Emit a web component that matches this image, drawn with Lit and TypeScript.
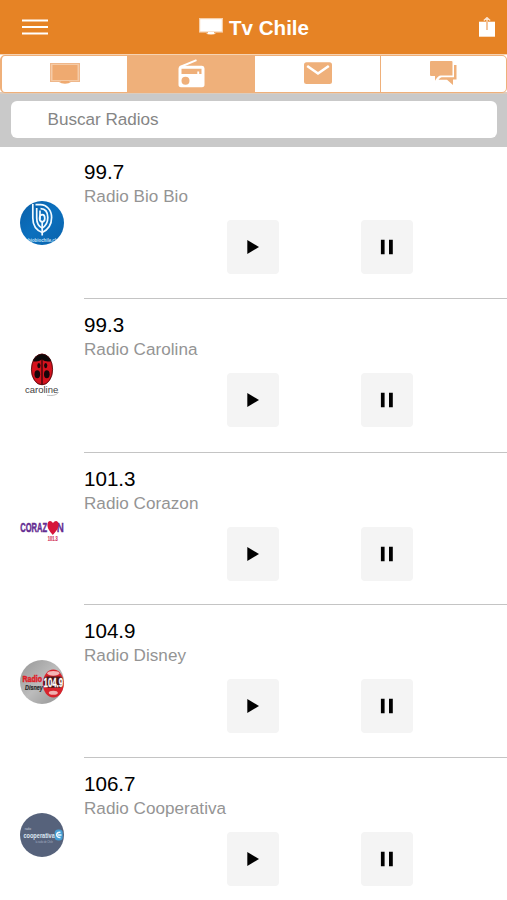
import { LitElement, html, svg, css } from "lit";
import { customElement } from "lit/decorators.js";

const logos = {
  biobio: svg`
    <defs>
      <linearGradient id="bio" x1="0" y1="0" x2="1" y2="1"><stop offset="0" stop-color="#0a5fa8"/><stop offset=".5" stop-color="#0b70be"/><stop offset="1" stop-color="#0a62ab"/></linearGradient>
      <clipPath id="bioClip"><circle cx="22" cy="22" r="22"/></clipPath>
    </defs>
    <circle cx="22" cy="22" r="22" fill="url(#bio)"/>
    <g fill="none" stroke="#f2faff" stroke-width="1.7" clip-path="url(#bioClip)">
      <path d="M12.8 3V17C12.8 25 17 29.5 22.2 31.5C27.5 29 31.6 24 31.6 16.5C31.6 9 26.5 3.6 20.5 3.6H15.5"/>
      <path d="M16.7 7V17C16.7 22.5 19 25.5 22.2 27C25.6 25 27.8 21.5 27.8 16.5C27.8 11 25 7.8 20.5 7.6"/>
      <path d="M20 9.5V18.5M22.2 21V34.5"/>
      <ellipse cx="22.2" cy="17.3" rx="2.6" ry="3.6"/>
    </g>
    <g clip-path="url(#bioClip)"><text transform="translate(8 41) scale(.88 1)" font-size="5" font-weight="700" fill="#c3e4f8">biobiochile.cl</text></g>`,
  carolina: svg`
    <ellipse cx="22" cy="15.4" rx="10.8" ry="15.6" fill="#d5121d"/>
    <path d="M12.6 7C15 2 18 0 22 0S29 2 31.4 7C28 8 24.5 7.6 22 5.6C19 7.6 16 8 12.6 7Z" fill="#0c0808"/>
    <path d="M22 5V30.5" stroke="#270508" stroke-width="1.2"/>
    <ellipse cx="18.9" cy="11.6" rx="1.6" ry="2.6" fill="#17060a"/><ellipse cx="25.7" cy="11.6" rx="1.6" ry="2.6" fill="#17060a"/>
    <ellipse cx="17.3" cy="20.3" rx="2.8" ry="4" fill="#17060a"/><ellipse cx="26.8" cy="20.3" rx="2.8" ry="4" fill="#17060a"/>
    <ellipse cx="22" cy="15.4" rx="10.6" ry="15.4" fill="none" stroke="#3c0b0d" stroke-width=".8"/>
    <text transform="translate(5 38.8) scale(1.08 1)" font-size="8.8" fill="#3e3e3e">caroline</text>
    <path d="M27 41.2C31 42 37 41.5 38.5 38" fill="none" stroke="#aaa" stroke-width=".8"/>`,
  corazon: svg`
    <text transform="translate(.2 23.6) scale(.6 1)" font-size="12.6" font-weight="700" fill="#642c91" stroke="#642c91" stroke-width=".5">CORAZ</text>
    <text transform="translate(36.8 23.6) scale(.78 1)" font-size="12.6" font-weight="700" fill="#642c91" stroke="#642c91" stroke-width=".3">N</text>
    <path d="M32.8 27C29.5 23 27 20 27.5 16C28 12.3 31 11.8 33 15C35 11.7 38.6 12.5 38.6 16.5C38.6 20.5 35.8 23.5 32.8 27Z" fill="#d6163b"/>
    <text transform="translate(27.8 33.4) scale(.63 1)" font-size="6.4" font-weight="700" fill="#d33a63" stroke="#d33a63" stroke-width=".2">101.3</text>`,
  disney: svg`
    <defs><linearGradient id="dis" x1="0" y1="0" x2="1" y2="1"><stop offset="0" stop-color="#979797"/><stop offset=".5" stop-color="#bcbcbc"/><stop offset="1" stop-color="#909090"/></linearGradient></defs>
    <circle cx="22" cy="22" r="22" fill="url(#dis)"/>
    <ellipse cx="33.3" cy="23.6" rx="10.5" ry="14" fill="#d8232c"/>
    <ellipse cx="33.3" cy="13.3" rx="6" ry="2.4" fill="#f3b4b5"/>
    <rect x="23.6" y="16.6" width="19.4" height="11.2" rx="4" fill="#4a1517"/>
    <ellipse cx="33.3" cy="32.8" rx="4.5" ry="2" fill="#efb0b0"/>
    <text transform="translate(23.6 26.6) scale(.62 1)" font-size="12.6" font-weight="700" fill="#fff" stroke="#fff" stroke-width=".3">104.9</text>
    <text transform="translate(2.4 22.4) scale(.82 1)" font-size="8.6" font-weight="700" fill="#df1e29" stroke="#df1e29" stroke-width=".5">Radio</text>
    <text transform="translate(5 30.4) scale(.7 1)" font-size="7.8" font-style="italic" font-weight="700" fill="#272727" stroke="#272727" stroke-width=".2">Disney</text>`,
  cooperativa: svg`
    <circle cx="22" cy="22" r="22" fill="#56627b"/>
    <text transform="translate(4.8 17.4) scale(.8 1)" font-size="3.6" fill="#c8d2df">radio</text>
    <text transform="translate(3.4 25) scale(.72 1)" font-size="7.8" font-weight="700" fill="#dde7f1">cooperativa</text>
    <text transform="translate(15.5 30) scale(.8 1)" font-size="3" fill="#a9b5c6">la radio de Chile</text>
    <rect x="34.7" y="16.6" width="8" height="11" rx="3.5" fill="#459fd5"/>
    <path d="M40.5 19.5C36 18 35 25 40.5 24.5M38 22H41.5" stroke="#eefaff" stroke-width="1.6" fill="none"/>`,
};

const stations = [
  { freq: "99.7", name: "Radio Bio Bio", logo: logos.biobio },
  { freq: "99.3", name: "Radio Carolina", logo: logos.carolina },
  { freq: "101.3", name: "Radio Corazon", logo: logos.corazon },
  { freq: "104.9", name: "Radio Disney", logo: logos.disney },
  { freq: "106.7", name: "Radio Cooperativa", logo: logos.cooperativa },
];

@customElement("app-root")
export class AppRoot extends LitElement {
  static styles = css`
    :host {
      display: block;
      height: 900px;
      overflow: hidden;
      background: #fff;
      font-family: "Liberation Sans", Arial, sans-serif;
    }
    * { box-sizing: border-box; }
    svg { display: block; flex: none; }
    svg text { font-family: "Liberation Sans", Arial, sans-serif; }
    .bar {
      height: 54px;
      padding: 0 12px 0 22px;
      display: grid;
      grid-template-columns: 60px 1fr 70px;
      align-items: center;
      background: #e68325;
      color: #fff;
    }
    .title {
      display: flex;
      align-items: center;
      justify-content: center;
      gap: 6px;
      padding-left: 1px;
      font-size: 20.6px;
      line-height: 24px;
      font-weight: 700;
      white-space: nowrap;
    }
    .title svg { margin-top: -3px; }
    .title span { padding-top: 2px; }
    .share { justify-self: end; }
    .tabs {
      height: 40px;
      padding: 1px 0;
      background: linear-gradient(#f6d3b3 1px, #fff 1px, #fff 38px, #dcccbd 38px);
    }
    .segments {
      height: 38px;
      display: grid;
      grid-template-columns: 125px 127px 126px 1fr;
      border: 1px solid #efb07a;
      border-left-width: 2px;
      border-radius: 5px;
      overflow: hidden;
    }
    .tab {
      display: flex;
      justify-content: center;
      padding-top: 3px;
      border-left: 1px solid #efb07a;
      color: #efb07a;
    }
    .tab:first-child { border-left: 0; }
    .tab.on { background: #efb07a; color: #fff; }
    .search { height: 53px; padding: 7px 10px 9px 11px; background: #c9c9c9; }
    .field {
      height: 37px;
      padding-left: 36.5px;
      border-radius: 6px;
      background: #fff;
      color: #858585;
      font-size: 17.1px;
      line-height: 38px;
    }
    .row {
      height: 153px;
      padding-left: 20px;
      display: grid;
      grid-template-columns: 64px 1fr;
    }
    .row:nth-child(1), .row:nth-child(3) { height: 152px; }
    .row:nth-child(2) { height: 154px; }
    .row:nth-child(n + 2) .body { padding-top: 14px; }
    .row:nth-child(n + 2) .logo { margin-top: 55px; }
    .logo { margin-top: 54px; overflow: visible; }
    .body { border-bottom: 1px solid #c4c4c4; padding-top: 13px; }
    .freq { font-size: 20.6px; line-height: 24px; color: #000; }
    .name { margin-top: 2px; font-size: 17.1px; line-height: 22px; color: #949494; letter-spacing: 0.03px; }
    .controls { display: flex; gap: 82px; padding: 12px 0 0 143px; }
    .btn {
      width: 52px;
      height: 54px;
      display: grid;
      place-items: center;
      border: 0;
      padding: 0;
      border-radius: 4px;
      background: #f4f4f4;
    }
  `;

  render() {
    return html`
      <header class="bar">
        <svg width="26" height="18" viewBox="0 0 26 18" stroke="#fff" stroke-width="2"><path d="M0 2.5H26M0 9H26M0 15.5H26"/></svg>
        <div class="title">
          <svg width="24" height="18" viewBox="0 0 24 18">
            <rect x=".6" y="1.6" width="22.8" height="13.4" fill="#fff" stroke="#f7cfaa" stroke-width="1.2"/>
            <path d="M9 15H15V16.2H17Q16 17.6 12 17.6T7 16.2H9Z" fill="#fff"/>
          </svg>
          <span>Tv Chile</span>
        </div>
        <svg class="share" width="16" height="21" viewBox="0 0 16 21">
          <rect y="4.7" width="16" height="15" fill="#fff"/>
          <path d="M8 13V4" stroke="#efa565" stroke-width="1.3"/>
          <path d="M8 4.7V.8M4.8 3.4L8 .6L11.2 3.4" fill="none" stroke="#fbe3cf" stroke-width="1.3"/>
        </svg>
      </header>
      <nav class="tabs">
        <div class="segments">
          <div class="tab">
            <svg width="30" height="28" viewBox="0 0 30 28">
              <rect x=".5" y="4.5" width="29" height="18" fill="#f5cba6" stroke="#efb78a"/>
              <rect x="2.5" y="6" width="25" height="15" fill="#efaa70"/>
              <path d="M11 22H19V23H21Q19 24.8 15 24.8T9 23H11Z" fill="#efaa70"/>
            </svg>
          </div>
          <div class="tab on">
            <svg width="27" height="30" viewBox="0 0 27 30">
              <path d="M2 8L18.5 1.2" stroke="#fff" stroke-width="1.9"/>
              <path fill="#fff" fill-rule="evenodd" d="M3 6.8H24A2.7 2.7 0 0 1 26.5 9.5V25.5A2.7 2.7 0 0 1 24 28.3H3A2.7 2.7 0 0 1 .5 25.5V9.5A2.7 2.7 0 0 1 3 6.8ZM3.5 9.8V15H19.3V12.5H21.2V15H23.5V9.8ZM7.5 17.7A4 4 0 1 0 7.5 25.7A4 4 0 1 0 7.5 17.7Z"/>
            </svg>
          </div>
          <div class="tab">
            <svg width="28" height="28" viewBox="0 0 28 28">
              <rect y="3.2" width="28" height="21.8" rx="2.5" fill="#efb07a"/>
              <path d="M3.2 7L14 14.5L24.8 7" fill="none" stroke="#fff" stroke-width="2.6"/>
            </svg>
          </div>
          <div class="tab">
            <svg width="27" height="28" viewBox="0 0 27 28" fill="#efb07a">
              <path d="M1 2H21.5A1 1 0 0 1 22.5 3V16.5H11C8.5 16.5 7.5 18 5 21.8V17H1A1 1 0 0 1 0 16V3A1 1 0 0 1 1 2Z"/>
              <path d="M24 6H26.5V20.5H23V26L17 20.8H8.5C10 18.6 11 18.3 13 18.3H24Z"/>
            </svg>
          </div>
        </div>
      </nav>
      <div class="search"><div class="field">Buscar Radios</div></div>
      <main>
        ${stations.map((s) => html`
          <section class="row">
            <svg class="logo" width="44" height="44" viewBox="0 0 44 44">${s.logo}</svg>
            <div class="body">
              <div class="freq">${s.freq}</div>
              <div class="name">${s.name}</div>
              <div class="controls">
                <button class="btn" aria-label="Play"><svg width="14" height="16" viewBox="0 0 14 16"><path d="M1.3 1L13 8L1.3 15Z"/></svg></button>
                <button class="btn" aria-label="Pause"><svg width="14" height="16" viewBox="0 0 14 16"><path d="M.9 .8H4.6V15.2H.9ZM9 .8H12.8V15.2H9Z"/></svg></button>
              </div>
            </div>
          </section>`)}
      </main>
    `;
  }
}
